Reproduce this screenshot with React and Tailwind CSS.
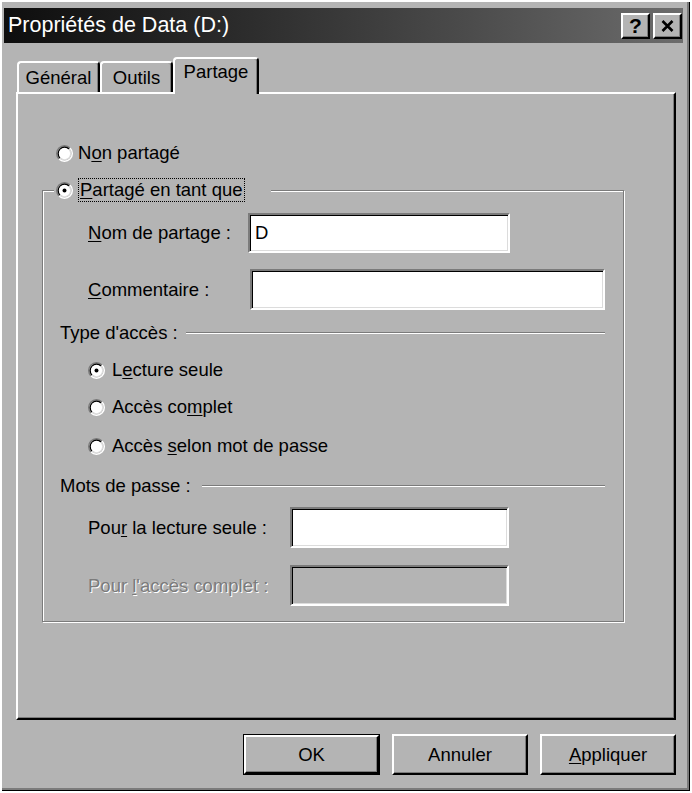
import React from "react";

const GRAY = "bg-[#b4b4b4]";

function Radio({ checked }) {
  return (
    <svg width="17" height="17" viewBox="0 0 12 12" className="shrink-0">
      <path d="M2.11 9.89A5.5 5.5 0 0 1 9.89 2.11" fill="none" stroke="#7b7b7b" />
      <path d="M9.89 2.11A5.5 5.5 0 0 1 2.11 9.89" fill="none" stroke="#ffffff" />
      <path d="M2.82 9.18A4.5 4.5 0 0 1 9.18 2.82" fill="none" stroke="#000000" />
      <path d="M9.18 2.82A4.5 4.5 0 0 1 2.82 9.18" fill="none" stroke="#dcdcdc" />
      <circle cx="6" cy="6" r="4" fill="#ffffff" />
      {checked && <circle cx="6" cy="6" r="1.4" fill="#000000" />}
    </svg>
  );
}

function Field({ className, value, disabled }) {
  return (
    <div
      className={`h-full border-2 border-t-[#7b7b7b] border-l-[#7b7b7b] border-r-white border-b-white shadow-[inset_1px_1px_0_#000,inset_-1px_-1px_0_#dcdcdc] flex items-center pl-[5px] text-[18.5px] ${
        disabled ? "bg-[#b4b4b4]" : "bg-white"
      } ${className}`}
    >
      {value}
    </div>
  );
}

function Etched({ className }) {
  return <div className={`h-[2px] flex-1 border-t border-t-[#7b7b7b] border-b border-b-white ${className}`} />;
}

function Button({ children, isDefault, className }) {
  const inner = (
    <div className="w-full h-full flex items-center justify-center border-2 border-t-white border-l-white border-r-black border-b-black shadow-[inset_-1px_-1px_0_#7b7b7b] text-[18.5px]">
      {children}
    </div>
  );
  if (isDefault) {
    return <div className={`h-[41px] border border-black ${className}`}>{inner}</div>;
  }
  return <div className={`h-[41px] ${className}`}>{inner}</div>;
}

export default function App() {
  return (
    <div className="w-[692px] h-[793px] bg-white font-['Liberation_Sans',Arial,sans-serif] text-black">
      <div className={`w-[690px] h-[791px] ${GRAY} pt-[8px] pl-[4px] pr-[5px] shadow-[inset_2px_2px_0_#fff,inset_-1px_-1px_0_#000,inset_-3px_-3px_0_#7b7b7b]`}>
        {/* title bar */}
        <div className="h-[35px] w-[679px] flex items-center bg-linear-to-r from-[#0e0e0e] to-[#6c6c6c] pl-[4px] pr-[1px]">
          <span className="text-white text-[21.5px] leading-none">Propriétés de Data (D:)</span>
          <div className="ml-auto flex gap-[3px]">
            <div className={`w-[29px] h-[26px] ${GRAY} flex items-center justify-center border-2 border-t-white border-l-white border-r-black border-b-black shadow-[inset_-1px_-1px_0_#7b7b7b] text-[21px] font-bold leading-none`}>
              ?
            </div>
            <div className={`w-[29px] h-[26px] ${GRAY} flex items-center justify-center border-2 border-t-white border-l-white border-r-black border-b-black shadow-[inset_-1px_-1px_0_#7b7b7b]`}>
              <svg width="13" height="12" viewBox="0 0 13 12">
                <path d="M1.5 1 L11.5 11 M11.5 1 L1.5 11" stroke="#000" strokeWidth="2.6" />
              </svg>
            </div>
          </div>
        </div>

        {/* tabs */}
        <div className="mt-[14px] ml-[13px] flex items-end h-[35px] text-[18.5px]">
          <div className="w-[83px] h-[31px] flex items-center justify-center border-l-2 border-t-2 border-white border-r-2 border-r-black rounded-t-[4px] shadow-[inset_-1px_0_0_#7b7b7b]">
            Général
          </div>
          <div className="w-[73px] h-[31px] flex items-center justify-center border-l-2 border-t-2 border-white border-r-2 border-r-black rounded-t-[4px] shadow-[inset_-1px_0_0_#7b7b7b]">
            Outils
          </div>
          <div className={`relative z-10 -mb-[2px] w-[86px] h-[37px] ${GRAY} flex items-center justify-center pb-[9px] border-l-2 border-t-2 border-white border-r-2 border-r-black rounded-t-[4px] shadow-[inset_-1px_0_0_#7b7b7b]`}>
            Partage
          </div>
        </div>

        {/* panel */}
        <div className="ml-[12px] w-[660px] h-[628px] border-t-2 border-l-2 border-t-white border-l-white border-r-2 border-b-2 border-r-black border-b-black shadow-[inset_-1px_-1px_0_#7b7b7b] pt-[49px] text-[18.5px]">
          <div className="ml-[38px] h-[20px] flex items-center gap-[5px]">
            <Radio />
            <span>
              N<u className="underline-offset-2">o</u>n partagé
            </span>
          </div>

          <fieldset className="ml-[24px] mt-[14px] w-[582px] border border-[#7b7b7b] shadow-[inset_1px_1px_0_#fff,1px_1px_0_#fff] pb-[15px]">
            <legend className={`ml-[11px] pl-[2px] pr-[26px] h-[26px] flex items-center gap-[5px] ${GRAY}`}>
              <Radio checked />
              <span className="border border-dotted border-black px-[1px] leading-[22px]">
                <u className="underline-offset-2">P</u>artagé en tant que
              </span>
            </legend>

            <div className="mt-[10px] h-[40px] flex items-center">
              <span className="ml-[45px] w-[160px]">
                <u className="underline-offset-2">N</u>om de partage :
              </span>
              <Field className="w-[262px]" value="D" />
            </div>

            <div className="mt-[16px] h-[41px] flex items-center">
              <span className="ml-[45px] w-[162px]">
                <u className="underline-offset-2">C</u>ommentaire :
              </span>
              <Field className="w-[355px]" />
            </div>

            <div className="mt-[13px] h-[20px] flex items-center">
              <span className="ml-[17px]">Type d'accès :</span>
              <Etched className="ml-[8px] mr-[18px]" />
            </div>

            <div className="mt-[17px] h-[20px] ml-[45px] flex items-center gap-[7px]">
              <Radio checked />
              <span>
                L<u className="underline-offset-2">e</u>cture seule
              </span>
            </div>
            <div className="mt-[17px] h-[20px] ml-[45px] flex items-center gap-[7px]">
              <Radio />
              <span>
                Accès co<u className="underline-offset-2">m</u>plet
              </span>
            </div>
            <div className="mt-[19px] h-[20px] ml-[45px] flex items-center gap-[7px]">
              <Radio />
              <span>
                Accès <u className="underline-offset-2">s</u>elon mot de passe
              </span>
            </div>

            <div className="mt-[20px] h-[20px] flex items-center">
              <span className="ml-[17px]">Mots de passe :</span>
              <Etched className="ml-[11px] mr-[18px]" />
            </div>

            <div className="mt-[11px] h-[41px] flex items-center">
              <span className="ml-[45px] w-[202px]">
                Pou<u className="underline-offset-2">r</u> la lecture seule :
              </span>
              <Field className="w-[219px]" />
            </div>

            <div className="mt-[17px] h-[41px] flex items-center">
              <span className="ml-[45px] w-[202px] text-[#7b7b7b] [text-shadow:1px_1px_0_#fff]">
                Pour <u className="underline-offset-2">l</u>'accès complet :
              </span>
              <Field className="w-[219px]" disabled />
            </div>
          </fieldset>
        </div>

        {/* buttons */}
        <div className="ml-[12px] w-[660px] mt-[14px] flex justify-end gap-[12px]">
          <Button isDefault className="w-[137px]">OK</Button>
          <Button className="w-[136px]">Annuler</Button>
          <Button className="w-[136px]">
            <span>
              <u className="underline-offset-2">A</u>ppliquer
            </span>
          </Button>
        </div>
      </div>
    </div>
  );
}
